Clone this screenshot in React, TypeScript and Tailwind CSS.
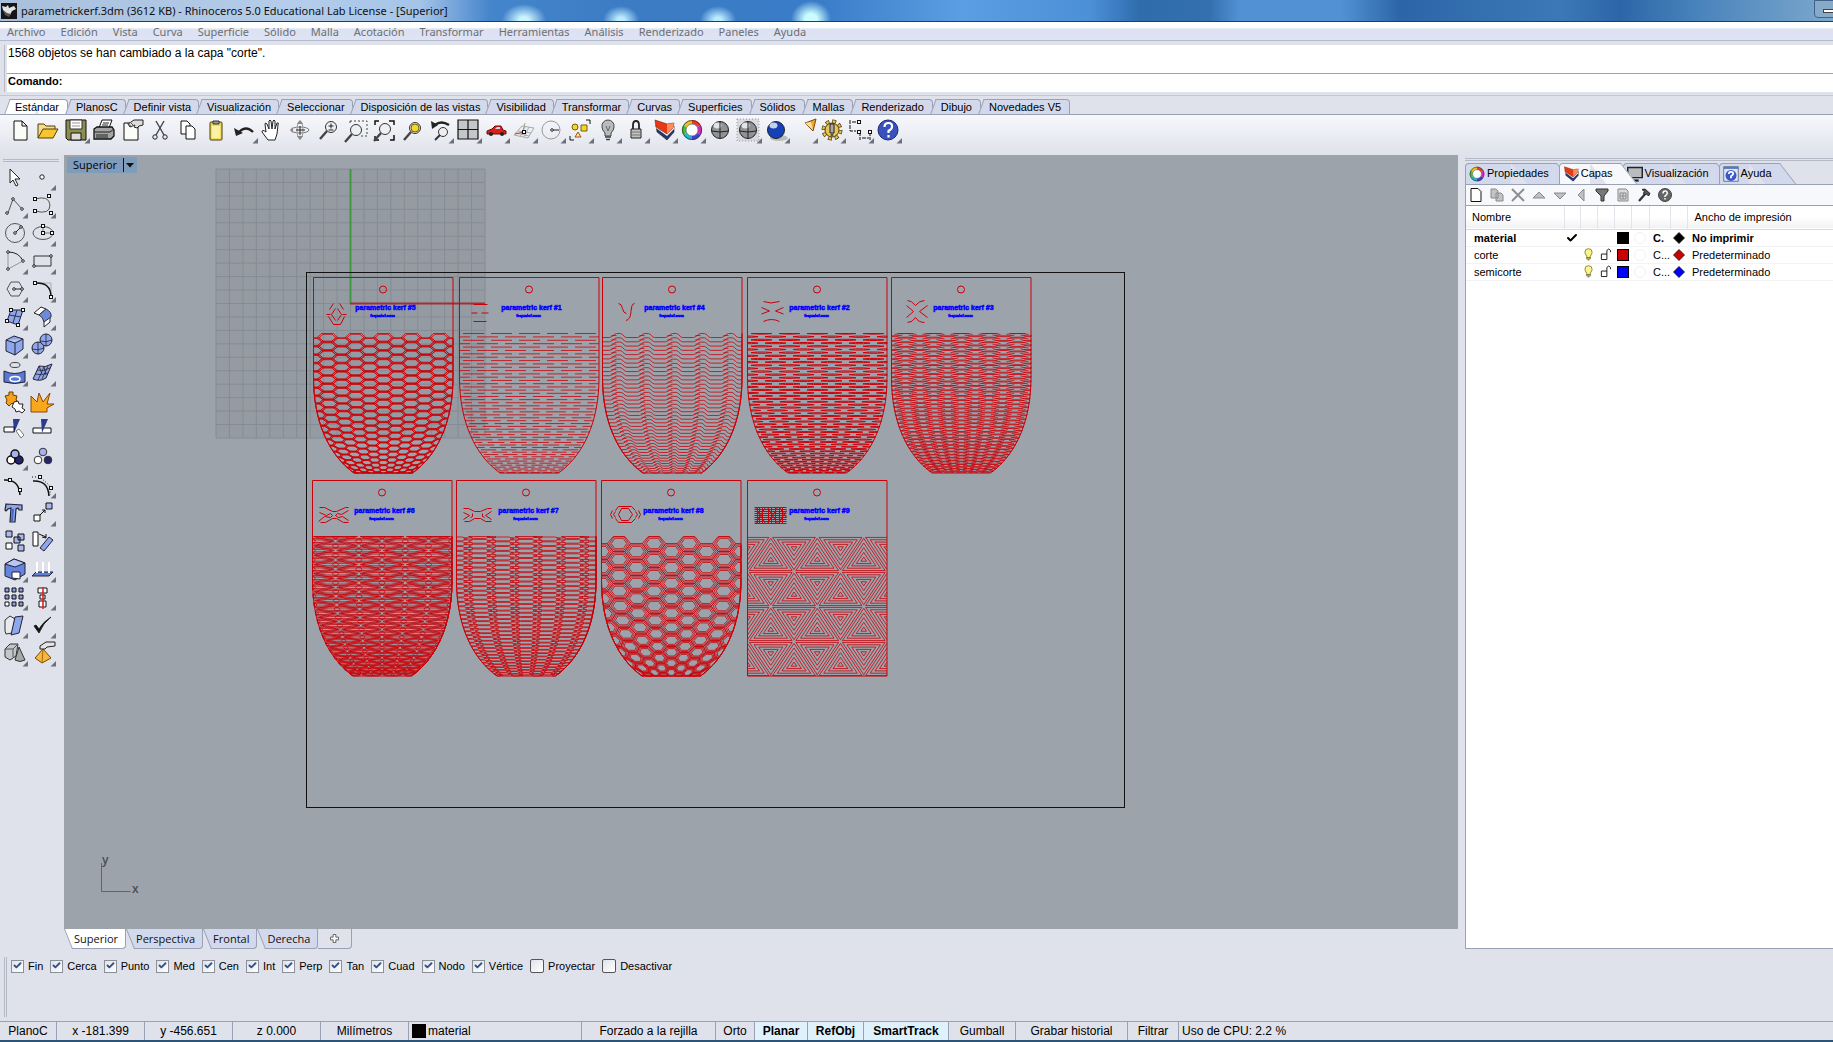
import type { ReactNode } from 'react'
import { Check } from 'lucide-react'

const menus = ['Archivo', 'Edición', 'Vista', 'Curva', 'Superficie', 'Sólido', 'Malla', 'Acotación', 'Transformar', 'Herramientas', 'Análisis', 'Renderizado', 'Paneles', 'Ayuda']

const toolTabs = ['Estándar', 'PlanosC', 'Definir vista', 'Visualización', 'Seleccionar', 'Disposición de las vistas', 'Visibilidad', 'Transformar', 'Curvas', 'Superficies', 'Sólidos', 'Mallas', 'Renderizado', 'Dibujo', 'Novedades V5']

const snaps = [
  { label: 'Fin', on: true },
  { label: 'Cerca', on: true },
  { label: 'Punto', on: true },
  { label: 'Med', on: true },
  { label: 'Cen', on: true },
  { label: 'Int', on: true },
  { label: 'Perp', on: true },
  { label: 'Tan', on: true },
  { label: 'Cuad', on: true },
  { label: 'Nodo', on: true },
  { label: 'Vértice', on: true },
  { label: 'Proyectar', on: false },
  { label: 'Desactivar', on: false }
]

const layers = [
  { name: 'material', current: true, color: '#000000', type: 'C.', width: 'No imprimir' },
  { name: 'corte', current: false, color: '#cc0000', type: 'C...', width: 'Predeterminado' },
  { name: 'semicorte', current: false, color: '#0000ff', type: 'C...', width: 'Predeterminado' }
]

/* ---------- Kerf samples ---------- */

type Pt = [number, number]

const W = 139.5
const H = 195.5
const TOP = 56
const SPAN = 167.4

// Inset of the sample outline at a given height
const inset = (y: number) => {
  if (y <= 100) return 0
  let lo = 0
  let hi = 1
  for (let i = 0; i < 16; i++) {
    const t = (lo + hi) / 2
    const u = 1 - t
    const cy = u * u * u * 100 + 3 * u * u * t * 145 + 3 * u * t * t * 178 + t * t * t * H
    if (cy < y) lo = t
    else hi = t
  }
  const t = lo
  const u = 1 - t
  return 3 * u * t * t * 16 + t * t * t * 40.5
}

const warp = ([x, s]: Pt): Pt => {
  const v = Math.min(Math.max(s / SPAN, 0), 1)
  const y = TOP + W * (1.2 * v - 0.2 * v * v * v)
  const left = inset(y)
  const cx = Math.min(Math.max(x, 0), W)
  return [left + (cx / W) * (W - 2 * left), y]
}

const line = (pts: Pt[], bend = true) =>
  'M' + pts.map((p) => (bend ? warp(p) : p)).map(([x, y]) => `${x.toFixed(2)} ${y.toFixed(2)}`).join('L')

const shape = (cx: number, cy: number, pts: Pt[]) => line(pts.map(([x, y]): Pt => [cx + x, cy + y]))

const hex = (w: number, h: number, flat: number): Pt[] => [[-w, 0], [-flat, -h], [flat, -h], [w, 0], [flat, h], [-flat, h], [-w, 0]]

// Staggered cells: every other row is shifted by half a column
const stagger = (pitchX: number, pitchY: number, x0: number, draw: (x: number, y: number, row: number) => string) => {
  let d = ''
  for (let row = 0; row * pitchY <= SPAN; row++) {
    for (let k = -1; k <= W / pitchX + 1; k++) {
      const x = x0 + k * pitchX + (row % 2 ? pitchX / 2 : 0)
      if (x > -pitchX / 2 && x < W + pitchX / 2) d += draw(x, row * pitchY, row)
    }
  }
  return d
}

const waves = () => {
  let d = ''
  for (let s = 0; s < SPAN; s += 4.3) {
    const pts: Pt[] = []
    for (let k = -1; k < 6; k++) {
      const x = k * 28
      pts.push([x + 7, s + 4], [x + 10, s + 2.8], [x + 12, s + 0.8], [x + 14, s], [x + 18, s], [x + 20, s + 1], [x + 22, s + 3.2], [x + 24, s + 4])
      d += shape(x + 12, s + 2, [[-3, 0], [2, 0]])
    }
    d += line(pts)
  }
  return d
}

const star = () => {
  let d = ''
  const a = 46.5
  const b = 35
  const clip = (p: Pt, q: Pt) => {
    const lo: Pt = [0, TOP]
    const hi: Pt = [W, H]
    let t0 = 0
    let t1 = 1
    for (const i of [0, 1] as const) {
      const dd = q[i] - p[i]
      if (Math.abs(dd) < 1e-6) {
        if (p[i] < lo[i] || p[i] > hi[i]) return
        continue
      }
      const r = [(lo[i] - p[i]) / dd, (hi[i] - p[i]) / dd].sort((m, n) => m - n)
      t0 = Math.max(t0, r[0])
      t1 = Math.min(t1, r[1])
    }
    if (t0 >= t1) return
    const at = (t: number): Pt => [p[0] + (q[0] - p[0]) * t, p[1] + (q[1] - p[1]) * t]
    d += line([at(t0), at(t1)], false)
  }
  // Each lattice edge carries a rhombus hatched along the edge
  const rhombus = (p: Pt, q: Pt, c: Pt, lines: number) => {
    for (let k = 0; k < lines; k++) {
      const t = (k + 0.4) / lines
      clip([p[0] + (c[0] - p[0]) * t, p[1] + (c[1] - p[1]) * t], [q[0] + (c[0] - q[0]) * t, q[1] + (c[1] - q[1]) * t])
    }
  }
  for (let j = -1; j < 6; j++) {
    for (let i = -1; i < 5; i++) {
      const x = i * a + (j % 2 ? 0 : a / 2)
      const y = TOP + j * b
      const p: Pt = [x, y]
      const r: Pt = [x + a, y]
      for (const dir of [1, -1]) {
        const m: Pt = [x + a / 2, y + dir * b]
        const c: Pt = [x + a / 2, y + (dir * b) / 3]
        rhombus(p, r, c, 5)
        rhombus(p, m, c, 5)
        rhombus(r, m, c, 5)
      }
    }
  }
  return d
}

const patterns: Record<number, string> = {
  1: stagger(28, 3.4, 14, (x, y) => shape(x, y, [[-10.5, 0], [10.5, 0]])),
  2: stagger(28, 3.2, 14, (x, y) => shape(x, y, [[-10.5, 0], [-4, -0.6], [4, -0.6], [10.5, 0], [4, 0.6], [-4, 0.6], [-10.5, 0]])),
  3: stagger(28, 2.3, 14, (x, y, row) => shape(x, y, row % 2 ? [[-11, -0.9], [-4, 0.9], [4, 0.9], [11, -0.9]] : [[-11, 0.9], [-4, -0.9], [4, -0.9], [11, 0.9]]) + shape(x, y, [[-8, 0], [8, 0]])),
  4: waves(),
  5: stagger(28, 4.25, 14, (x, y) => shape(x, y + 4.2, hex(8.5, 3.4, 4.5)) + shape(x, y + 4.2, hex(10.5, 4.2, 6))),
  6: stagger(46.5, 4.7, 23, (x, y) => shape(x, y, hex(20, 1.3, 9)) + shape(x, y, hex(22, 2.8, 12)) + shape(x, y, hex(3, 2, 1.5))),
  7: stagger(46.5, 2.4, 23, (x, y) => shape(x, y, hex(11, 1.9, 6)) + shape(x + 12, y, hex(4.5, 1, 3))),
  8: stagger(35, 8.1, 17.5, (x, y) => shape(x, y + 7, hex(7.8, 5.2, 4.2)) + shape(x, y + 7, hex(9.7, 6.7, 5)) + shape(x, y + 7, hex(11.7, 8.1, 5.8))),
  9: star()
}

const marks: Record<number, string> = {
  1: 'M14 27h14M12 35.500h6M22 35.500h7M14 44h13',
  2: 'M16 24q7 3 16 0M14 30l8 3.500-8 3M36 30l-8 3.500 8 3M16 44q8-4 16 0',
  3: 'M16 23q4 0 8 5 4-5 9-5M15 28l7 6-7 6M36 28l-8 6 8 6M16 45q5 0 8-5 3 5 9 5',
  4: 'M16 26q3 0 4 5t4 5M32 26q-3 0-3.500 8t-5 9',
  5: 'M16 32l4-6M30 32l-4-6M22 31l-4 6 4 6M24 31l4 6-4 6M13 37h4M29 37h4M15 39l5 8h7l4-8',
  6: 'M7 27h5l8 4h4l9-4h3M7 32l7 3 4-2 2 2-2 2-6-1-6 5M36 30l-7 4-4-1-2 2 3 2 4-1 6 4M8 42h5l7-4h4l7 4h5',
  7: 'M7 28h5l6 3h6l7-3h4M7 32l6 3-6 4M16 33v3l-2 1M35 31l-6 4 6 4M26 33v3l2 1M8 41h5l5-3h6l5 3h6',
  8: 'M17 34l3-6h7l4 6-4 6h-7zM14 30l3-4h13l4 4M14 38l3 4h13l4-4M14 31l-2 3 2 3M11 30l-2 4 2 4M34 31l2 3-2 3M37 30l2 4-2 4',
  9: 'M7 27h32M7 29h32M7 31h32M7 33h32M7 35h32M7 37h32M7 39h32M7 41h32M7 43h32M8 27l10 16M18 27L8 43M20 27l10 16M30 27L20 43M32 27l7 10M39 30l-8 13M12 27v16M24 27v16M35 27v16M10 27v16M15 27v16M21 27v16M28 27v16M32 27v16'
}

const samples = [
  { id: 5, x: 313.5, y: 277.5 },
  { id: 1, x: 459.5, y: 277.5 },
  { id: 4, x: 602.5, y: 277.5 },
  { id: 2, x: 747.5, y: 277.5 },
  { id: 3, x: 891.5, y: 277.5 },
  { id: 6, x: 312.5, y: 480.5 },
  { id: 7, x: 456.5, y: 480.5 },
  { id: 8, x: 601.5, y: 480.5 },
  { id: 9, x: 747.5, y: 480.5 }
]

function Sample({ id, x, y }: { id: number; x: number; y: number }) {
  return (
    <g transform={`translate(${x} ${y})`} fill="none" stroke="#cc0008" strokeWidth="1">
      <path d={id === 9 ? `M0 0H${W}V${H}H0Z` : `M0 0H${W}V100C${W} 145 ${W - 16} 178 ${W - 40.5} ${H}H40.500C16 178 0 145 0 100Z`} />
      <circle cx="69.5" cy="12" r="3.5" />
      <path d={marks[id]} />
      <path d={patterns[id]} strokeWidth={id === 2 ? 1 : 0.8} />
      <text x="72" y="32" textAnchor="middle" fill="#0000ff" stroke="#0000ff" strokeWidth="0.5" className="font-['Liberation_Sans'] text-[7px] font-bold">
        parametric kerf #{id}
      </text>
      <text x="69" y="39" textAnchor="middle" fill="#0000ff" stroke="#0000ff" strokeWidth="0.5" className="font-['Liberation_Sans'] text-[4px] font-bold">
        fequalsf.com
      </text>
    </g>
  )
}

function Drawing() {
  const grid = Array.from({ length: 21 }, (_, i) => i * 13.45)
  return (
    <svg className="absolute inset-0 size-full" aria-label="Vista superior">
      <g transform="translate(-64 -155)">
        <rect x="216" y="169" width="269" height="269" fill="#959ba2" />
        <path d={grid.map((g) => `M${216 + g} 169v269M216 ${169 + g}h269`).join('')} stroke="#868c93" strokeWidth="1" />
        <path d="M350.500 169v135" stroke="#3f9a3f" strokeWidth="2" />
        <path d="M350 303.500h135" stroke="#a03038" strokeWidth="2" />
        <rect x="306.5" y="272.5" width="818" height="535" fill="none" stroke="#111" />
        {samples.map((s) => (
          <Sample key={s.id} {...s} />
        ))}
        <path d="M101.500 863v28.500h29" fill="none" stroke="#5f656c" />
        <text x="102" y="864" fill="#4a5056" className="font-['Open_Sans'] text-[12px] font-semibold">y</text>
        <text x="132" y="893" fill="#4a5056" className="font-['Open_Sans'] text-[12px] font-semibold">x</text>
      </g>
    </svg>
  )
}

/* ---------- Icons ---------- */

const Handle = ({ x, y }: { x: number; y: number }) => <rect x={x - 1.5} y={y - 1.5} width="3" height="3" fill="#fff" stroke="#111" />

const Node = ({ x, y }: { x: number; y: number }) => <circle cx={x} cy={y} r="1.3" fill="#fff" stroke="#111" strokeWidth="0.9" />

const Layers = () => (
  <>
    <path d="M6 9l11 8 7-7v6l-7 8-10-8z" fill="#23366e" stroke="#222" strokeWidth=".6" />
    <path d="M6 9l11 7 7-6v3l-7 7-11-8z" fill="#f4f4f8" />
    <path d="M5 4l12 4 7-1-1 5-6 6L6 11z" fill="#e63a14" stroke="#7c1a08" strokeWidth=".6" />
    <path d="M17 8l7-1-1 5-6 6z" fill="#ff8a5c" />
  </>
)

const Wheel = () => (
  <g fill="none" strokeWidth="4">
    <path d="M14 6a8 8 0 0 1 7 4" stroke="#ee3a2a" />
    <path d="M21 10a8 8 0 0 1 0 8" stroke="#d42bc0" />
    <path d="M21 18a8 8 0 0 1-7 4" stroke="#4040e0" />
    <path d="M14 22a8 8 0 0 1-7-4" stroke="#25b5d8" />
    <path d="M7 18a8 8 0 0 1 0-8" stroke="#3fc43a" />
    <path d="M7 10a8 8 0 0 1 7-4" stroke="#f0c020" />
    <circle cx="14" cy="14" r="9.500" stroke="#333" strokeWidth=".8" />
    <circle cx="14" cy="14" r="6" fill="#fff" stroke="#555" strokeWidth=".7" />
  </g>
)

const Ball = ({ fill }: { fill: string }) => (
  <>
    <circle cx="14" cy="14" r="8.5" fill={fill} stroke="#222" />
    <ellipse cx="11.5" cy="9.5" rx="4" ry="3" fill="#fff" opacity=".75" />
  </>
)

const Lens = ({ x = 17, y = 11, children }: { x?: number; y?: number; children?: ReactNode }) => (
  <>
    <path d={`M${x - 4} ${y + 4}l-7 8`} stroke="#444" strokeWidth="2.4" />
    <circle cx={x} cy={y} r="5.5" fill="#eef0f4" stroke="#333" />
    {children}
  </>
)

const toolbar: { name: string; more?: boolean; art: ReactNode }[] = [
  { name: 'Nuevo', art: <path d="M8 5h8l5 5v14H8zM16 5v5h5" fill="#fbfbf8" stroke="#111" /> },
  { name: 'Abrir', art: <><path d="M4 22V8h6l2 2h9v4" fill="#f5dc8c" stroke="#54400c" /><path d="M4 22l5-9h15l-5 9z" fill="#f9c52c" stroke="#54400c" /></> },
  { name: 'Guardar', more: true, art: <><path d="M4 4h20v20H6l-2-2z" fill="#8d8d50" stroke="#111" /><path d="M8 4h12v9H8z" fill="#fff" stroke="#333" /><path d="M9 17h10v7H9z" fill="#ddd" stroke="#111" /><path d="M10 7h8M10 10h8" stroke="#999" /></> },
  { name: 'Imprimir', art: <><path d="M9 12l3-8h10l-3 8" fill="#fff" stroke="#111" /><path d="M4 13l3-2h15l2 3v6l-3 3H4z" fill="#a4a4a4" stroke="#111" strokeWidth="1.300" /><path d="M4 16h16l4-3M6 19h12M6 21h12M13 7h6M12 9h6" fill="none" stroke="#222" /></> },
  { name: 'Propiedades del documento', art: <><path d="M6 7h14v17H6z" fill="#fbfbf8" stroke="#111" /><path d="M10 8l6-4h9v5l-4 1-2 2-3-1 1-2-5 2z" fill="#ddd" stroke="#222" /><path d="M9 7l5 4M12 6l5 5" stroke="#555" /></> },
  { name: 'Cortar', art: <><path d="M10 5l8 14M18 5l-8 14" stroke="#444" strokeWidth="1.400" /><circle cx="9" cy="21" r="2.200" fill="none" stroke="#222" /><circle cx="19" cy="21" r="2.200" fill="none" stroke="#222" /></> },
  { name: 'Copiar', art: <><path d="M7 5h6l3 3v10H7z" fill="#fff" stroke="#111" /><path d="M12 10h6l3 3v10h-9z" fill="#fff" stroke="#111" /></> },
  { name: 'Pegar', art: <><rect x="8" y="6" width="12" height="18" rx="1" fill="#f3dc5c" stroke="#4a3c08" /><path d="M10 10h8v12h-8z" fill="#fbf0a4" /><path d="M11 5h6v3h-6z" fill="#999" stroke="#333" /></> },
  { name: 'Deshacer', more: true, art: <><path d="M9 16q7-7 14 0" fill="none" stroke="#222" strokeWidth="2.400" /><path d="M4 12l2 8 7-3z" fill="#222" /></> },
  { name: 'Encuadrar', art: <path d="M10 24l-6-8q0-3 4 0L7 8q0-2 2 0l2 5V5q1-2 2 0l1 8 1-8q1-2 2 0v8l2-6q2-1 1 2l-1 9-2 6z" fill="#fff" stroke="#222" /> },
  { name: 'Rotar vista', art: <><ellipse cx="14" cy="14" rx="9" ry="3" fill="none" stroke="#777" /><ellipse cx="14" cy="14" rx="3" ry="9" fill="none" stroke="#999" /><path d="M11 8l3-4 3 4zM11 20l3 4 3-4zM7 11l-3 3 3 3z" fill="#888" /><path d="M14 10v9M10 14h9" stroke="#222" /></> },
  { name: 'Zoom dinámico', art: <Lens><path d="M14.500 10h5M17 7.500v5M14.500 14h5" stroke="#222" /></Lens> },
  { name: 'Zoom ventana', art: <><path d="M8 5h17v15h-6M8 5v4" fill="none" stroke="#444" strokeDasharray="2 2" /><Lens x={14} y={14} /></> },
  { name: 'Zoom extensión', art: <><path d="M5 9V5h4M19 5h5v4M24 19v5h-4M9 24H5v-4" fill="none" stroke="#111" strokeWidth="1.500" /><Lens x={15} y={13} /></> },
  { name: 'Zoom selección', art: <Lens x={17} y={12}><circle cx="17" cy="12" r="4" fill="#f5d628" stroke="#74600c" /></Lens> },
  { name: 'Deshacer vista', more: true, art: <><path d="M9 9q6-5 14 0" fill="none" stroke="#222" strokeWidth="2.500" /><path d="M5 5l1 8 6-4z" fill="#222" /><circle cx="17" cy="16" r="4.500" fill="#eee" stroke="#333" /><path d="M14 19l-5 5" stroke="#333" strokeWidth="2" /></> },
  { name: 'Cuatro vistas', more: true, art: <path d="M4 4h20v19H4zM14 4v19M4 13.500h20" fill="#c4c6ca" stroke="#111" strokeWidth="1.200" /> },
  { name: 'Vista derecha', more: true, art: <><path d="M5 15l5-2 3-3h6l2 4 3 1v3H5z" fill="#dc2018" stroke="#6a0c08" /><path d="M13 13l2-2h3v2z" fill="#cde" /><circle cx="9" cy="18" r="2" fill="#222" /><circle cx="20" cy="18" r="2" fill="#222" /></> },
  { name: 'Planos de construcción', more: true, art: <><path d="M4 19l8-9 12 2-6 10zM8 15l13 2M15 11l-5 10M19 11l-5 10M6 17l13 3" fill="none" stroke="#aaa" /><path d="M5 18l9-2" stroke="#c33" /><path d="M13 15l2-8" stroke="#8a8" /><Handle x={14} y={16} /></> },
  { name: 'Punto objetivo', more: true, art: <><circle cx="13" cy="14" r="9" fill="none" stroke="#999" /><path d="M13 14h8" stroke="#222" /><Node x={14} y={14} /></> },
  { name: 'Seleccionar objetos', more: true, art: <><circle cx="9" cy="11" r="3" fill="#f5d628" stroke="#74600c" /><path d="M15 9h6v6h-6z" fill="#f5d628" stroke="#74600c" /><path d="M12 16l3 5H9z" fill="#fce8a8" stroke="#a84c0c" /><path d="M20 4h4v4M4 20v4h4" fill="none" stroke="#111" /></> },
  { name: 'Ocultar', more: true, art: <><path d="M14 4a6 6 0 0 1 6 7q0 3-3 6v3h-6v-3q-3-3-3-6a6 6 0 0 1 6-7z" fill="#b9bbbf" stroke="#444" /><path d="M11 21h6M12 23.500h4" stroke="#444" strokeWidth="1.500" /><path d="M12 10l2 5 2-5" stroke="#666" fill="none" /></> },
  { name: 'Bloquear', more: true, art: <><path d="M11 13V9q0-4 3-4t3 4v4" fill="none" stroke="#222" strokeWidth="1.800" /><path d="M9 13h10v9H9z" fill="#c0c2c0" stroke="#222" /><path d="M10 16h8M10 19h8" stroke="#777" /></> },
  { name: 'Capas', more: true, art: <Layers /> },
  { name: 'Propiedades', more: true, art: <Wheel /> },
  { name: 'Sombrear', art: <><Ball fill="#909296" /><path d="M14 5.500v17M5.500 15q8 2 17 0" fill="none" stroke="#222" /></> },
  { name: 'Sombrear vistas', more: true, art: <><path d="M3 3h22v22H3z" fill="#d8dae0" stroke="#999" strokeDasharray="1 2" /><Ball fill="#909296" /><path d="M14 5.500v17M5.500 15q8 2 17 0" fill="none" stroke="#222" /></> },
  { name: 'Renderizar', more: true, art: <><ellipse cx="17" cy="22" rx="9" ry="3" fill="#bbb" /><Ball fill="#1440b8" /></> },
  { name: 'Foco', more: true, art: <><path d="M15 7l11-4-3 12z" fill="#f3a52c" stroke="#74480c" /><path d="M15 7l6-1 2 8" fill="#fce0a0" /></> },
  { name: 'Opciones', more: true, art: <><circle cx="14" cy="14" r="8.500" fill="none" stroke="#54400c" strokeWidth="4" strokeDasharray="3.800 2.875" /><circle cx="14" cy="14" r="8.500" fill="none" stroke="#eac454" strokeWidth="2.400" strokeDasharray="2.400 4.275" strokeDashoffset="-.7" /><circle cx="14" cy="14" r="7" fill="#eac454" stroke="#54400c" /><path d="M12 8h4v9h-4z" fill="#aaa" stroke="#222" /><circle cx="14" cy="19" r="1.500" fill="#555" /></> },
  { name: 'Acotación', more: true, art: <><path d="M6 6h8M4 4v11h6M14 16v8M24 16v8M16 22h7" fill="none" stroke="#111" strokeDasharray="4 1" /><Handle x={13} y={6} /><Handle x={13} y={16} /><Handle x={24} y={16} /></> },
  { name: 'Ayuda', more: true, art: <><circle cx="14" cy="14" r="10" fill="#3a50bc" stroke="#1c2c74" /><path d="M10.500 11q0-4 4-4t3.500 4q0 2-3.500 4v2M14.500 19v2.500" fill="none" stroke="#fff" strokeWidth="2.200" /></> }
]

const B = '#8ea6ec'

const tools: { name: string; more?: boolean; art: ReactNode }[] = [
  { name: 'Cancelar', art: <path d="M10 6v14l3-3 3 6 2-1-3-6h5z" fill="#fff" stroke="#222" /> },
  { name: 'Punto', more: true, art: <circle cx="14" cy="14" r="2.200" fill="#fff" stroke="#222" /> },
  { name: 'Polilínea', more: true, art: <><path d="M8 22l5-14 9 10" fill="none" stroke="#555" /><Node x={7} y={22} /><Node x={13} y={8} /><Node x={22} y={18} /></> },
  { name: 'Curva', more: true, art: <><path d="M7 8q14-4 15 6 0 10-15 6" fill="none" stroke="#555" /><Handle x={7} y={8} /><Handle x={21} y={5} /><Handle x={7} y={20} /><Handle x={23} y={22} /></> },
  { name: 'Círculo', more: true, art: <><circle cx="15" cy="14" r="9.500" fill="none" stroke="#555" /><path d="M15 14l6-6" stroke="#222" /><Node x={15} y={14} /><Node x={21} y={8} /></> },
  { name: 'Elipse', more: true, art: <><ellipse cx="15" cy="14" rx="10" ry="6.500" fill="none" stroke="#555" /><path d="M15 7v7h9" fill="none" stroke="#777" /><Handle x={15} y={7} /><Handle x={15} y={14} /><Handle x={24} y={14} /></> },
  { name: 'Arco', more: true, art: <><path d="M8 5v17l15-8" fill="none" stroke="#999" /><path d="M8 5q11 0 15 9" fill="none" stroke="#222" /><Node x={8} y={5} /><Node x={8} y={22} /><Node x={23} y={14} /></> },
  { name: 'Rectángulo', more: true, art: <><path d="M6 9h17v10H6z" fill="none" stroke="#333" /><Node x={23} y={9} /><Node x={6} y={19} /></> },
  { name: 'Polígono', more: true, art: <><path d="M7 14l4-7h8l4 7-4 7h-8z" fill="none" stroke="#555" /><path d="M14 14h8" stroke="#222" /><Node x={14} y={14} /><Node x={22} y={14} /></> },
  { name: 'Empalme', more: true, art: <><path d="M7 8h16v14" fill="none" stroke="#aaa" /><path d="M7 8q16-1 16 14" fill="none" stroke="#111" strokeWidth="1.500" /><Handle x={7} y={8} /><Handle x={23} y={22} /></> },
  { name: 'Superficie', more: true, art: <><path d="M11 7h12l-5 15-11-4z" fill={B} stroke="#223" /><path d="M9 12l12 2M17 7l-4 13" stroke="#334" /><Handle x={11} y={7} /><Handle x={23} y={7} /><Handle x={7} y={18} /><Handle x={18} y={22} /></> },
  { name: 'Empalmar superficies', more: true, art: <><path d="M6 10l7-6 5 2-7 6zM16 18l6-4v5l-6 5z" fill="#fff" stroke="#222" /><path d="M11 12l7-6q6 3 5 8l-7 5q-1-5-5-7z" fill="#7088d8" stroke="#334" /></> },
  { name: 'Caja', more: true, art: <><path d="M6 9l8-4 9 3v10l-8 6-9-4z" fill={B} stroke="#223" /><path d="M6 9l9 3 8-4" fill="#b8c6f4" stroke="#223" /><path d="M15 12v12" stroke="#223" /></> },
  { name: 'Esferas booleanas', more: true, art: <><circle cx="18" cy="9" r="6" fill={B} stroke="#223" /><circle cx="10" cy="17" r="6" fill={B} stroke="#223" /><path d="M4 18q6 2 12-1M10 11v12M12 10q6 2 12-1M18 3v12" fill="none" stroke="#223" strokeWidth=".8" /></> },
  { name: 'Proyectar curvas', more: true, art: <><ellipse cx="15" cy="6" rx="5" ry="2.500" fill="none" stroke="#444" /><path d="M4 12q11 5 21 0v11q-10 3-21 0z" fill="#5878d8" stroke="#223" /><ellipse cx="15" cy="20" rx="5" ry="2.500" fill="none" stroke="#fff" strokeWidth="1.500" /></> },
  { name: 'Malla', more: true, art: <><path d="M11 7q6 2 13-2l-6 14q-6 4-13 1z" fill={B} stroke="#223" /><path d="M9 11q6 2 13-2M7 15q6 2 13-1M16 8l-6 13M20 7l-6 13M11 7l3 8M16 8l2 8" fill="none" stroke="#223" strokeWidth=".8" /></> },
  { name: 'Unir', art: <><path d="M5 9l4-1V5h4v3l4 1-1 4 2 2-4 3-2-2-3 3-3-3 1-3z" fill="#f5a11c" stroke="#6a3c04" /><path d="M14 15l4-1 1 3h4l-1 4 3 2-3 3-3-2-3 1-1-3-3-2z" fill="#fff" stroke="#222" /></> },
  { name: 'Descomponer', art: <path d="M3 25V9l6 6 2-9 4 9 7-9-3 11h7l-7 4v4z" fill="#f9a81c" stroke="#8a4808" /> },
  { name: 'Recortar', art: <><path d="M13 4h7l-6 14z" fill="#2a3c8c" /><path d="M4 12h10v5H4z" fill="#fff" stroke="#111" /><path d="M16 16l3-2 5 6-3 3z" fill="#fff" stroke="#777" /></> },
  { name: 'Partir', art: <><path d="M5 13h18v5H5z" fill="#fff" stroke="#111" /><path d="M13 4h7l-6 14z" fill="#2a3c8c" /></> },
  { name: 'Agrupar', more: true, art: <g stroke="#111" strokeWidth="1.500"><circle cx="11" cy="17" r="4" fill="#fff" /><circle cx="19" cy="17" r="4" fill="#24246c" /><circle cx="15" cy="11" r="4" fill="#a8b0f0" /></g> },
  { name: 'Desagrupar', art: <g stroke="#333"><circle cx="15" cy="9" r="3.800" fill="#a8b0f0" /><circle cx="10" cy="17" r="3.800" fill="#fff" /><circle cx="20" cy="17" r="3.800" fill="#24246c" /></g> },
  { name: 'Editar puntos', art: <><path d="M4 9q15-1 16 15" fill="none" stroke="#111" strokeWidth="1.500" /><Handle x={10} y={9} /><Handle x={20} y={19} /></> },
  { name: 'Puntos de control', more: true, art: <><path d="M5 10q15-1 16 15" fill="none" stroke="#111" strokeWidth="1.500" /><path d="M4 6h8l10 9v9" fill="none" stroke="#111" strokeDasharray="1 2" /><Handle x={12} y={6} /><Handle x={23} y={17} /></> },
  { name: 'Texto', art: <><path d="M6 5l16 1v5h-3l-1-2-2 1-1 13h-5l1-14-3 1-2 2-1-1z" fill={B} stroke="#223" strokeWidth="1.200" /><path d="M13 10l-1 12" stroke="#4466c8" strokeWidth="2" /></> },
  { name: 'Mover', more: true, art: <><path d="M6 16h6v6H6z" fill="#fff" stroke="#111" /><path d="M18 4h6v6h-6z" fill="#a8b8f0" stroke="#111" /><path d="M12 16l5-5M14 11h3v3" fill="none" stroke="#111" /></> },
  { name: 'Copiar objetos', art: <g stroke="#111"><path d="M6 4h6v6H6zM18 7h6v6h-6zM14 10h6v6h-6zM18 18h6v6h-6z" fill="#a8b8f0" /><path d="M6 16h6v6H6z" fill="#fff" /></g> },
  { name: 'Rotar', art: <><path d="M5 5h5v14H5z" fill="#fff" stroke="#111" /><path d="M12 21l9-11 4 3-9 11z" fill={B} stroke="#223" /><path d="M11 7l7 3M18 7v4l-4-1" fill="none" stroke="#111" /></> },
  { name: 'Escalar', more: true, art: <><path d="M5 9l9-5 11 4v11l-10 6-10-4z" fill="#6484e0" stroke="#223" /><path d="M5 9l9-5 11 4-10 4z" fill="#b8c6f4" stroke="#223" /><path d="M12 17h8v7l-8-1z" fill="#fff" stroke="#223" /></> },
  { name: 'Proyectar', more: true, art: <><path d="M4 21l4-4h17l-4 4z" fill="#6080dc" stroke="#223" /><path d="M9 18V7M15 18V7M21 18V7" stroke="#fff" strokeWidth="2" /></> },
  { name: 'Matriz', more: true, art: <g stroke="#111"><path d="M5 5h4v4H5zM12 5h4v4h-4zM19 5h4v4h-4zM5 12h4v4H5zM12 12h4v4h-4zM19 12h4v4h-4zM12 19h4v4h-4zM19 19h4v4h-4z" fill="#8c9ce0" /><path d="M5 19h4v4H5z" fill="#fff" /></g> },
  { name: 'Alinear', more: true, art: <><path d="M10 5h9v5h-9zM12 12h5v4h-5zM11 18h7v6h-7z" fill="#fff" stroke="#111" /><path d="M15 4v22" stroke="#e02020" strokeWidth="1.600" /></> },
  { name: 'Historial', more: true, art: <><path d="M5 9l5-4 5 3-3 14-6 1-1-3z" fill="#e8eaee" stroke="#333" /><path d="M15 6l8-1-4 17-8 2z" fill={B} stroke="#223" /></> },
  { name: 'Comprobar', more: true, art: <path d="M6 15l5 7q4-10 12-16-8 5-12 12l-3-4z" fill="#111" stroke="#111" strokeWidth=".8" /> },
  { name: 'Sólidos', more: true, art: <><path d="M5 10l5-5h8l-2 12-6 4-5-3z" fill="#c4c6ca" stroke="#333" /><path d="M5 10h8l5-5M13 10v8" fill="none" stroke="#555" /><path d="M19 8l6 13q-5 3-10 0z" fill="#a6a8ac" stroke="#333" /></> },
  { name: 'Renderizado', more: true, art: <><path d="M7 19l8-9 8 9-9 5z" fill="#f7b93c" stroke="#74480c" /><path d="M15 10l-1 14" stroke="#a8680c" /><path d="M12 7l6-4h9v4l-8 1-2 2h-5z" fill="#e4e4e4" stroke="#222" /></> }
]

function ToolButton({ name, more, art }: { name: string; more?: boolean; art: ReactNode }) {
  return (
    <button type="button" title={name} aria-label={name} className="size-7 shrink-0">
      <svg viewBox="0 0 28 28" className="size-7" fill="none">
        {art}
        {more && <path d="M28 22v5.500h-5.500z" fill="#6d7078" />}
      </svg>
    </button>
  )
}

function Caption({ children }: { children: ReactNode }) {
  return (
    <div className="relative h-[22px] shrink-0 overflow-hidden border-b border-[#1f3c6c] bg-[radial-gradient(ellipse_22px_16px_at_524px_20px,#c9f4ff_20%,transparent),radial-gradient(ellipse_18px_14px_at_621px_20px,#b9eaff_20%,transparent),radial-gradient(ellipse_18px_14px_at_718px_20px,#b9eaff_20%,transparent),radial-gradient(ellipse_20px_18px_at_811px_19px,#c9fbff_30%,transparent),linear-gradient(90deg,#a8c0dc_0,#b4cdea_300px,#a4c4e8_420px,#4585cc_490px,#3c7cc4_620px,#3a7cc8_820px,#5c9ee2_960px,#4c90d8_1090px,#2f6cac_1140px,#3470b0_1210px,#5292d4_1240px,#5292d4_1340px,#2c66a8_1400px,#3c78b8_1560px,#2c66a8_1620px,#4a84bc_1700px,#7ca8cc_1833px)]">
      {children}
    </div>
  )
}

function ViewTab({ label, active }: { label: string; active?: boolean }) {
  const tone = active ? 'before:bg-white after:bg-white' : 'before:bg-[#d3d9ec] after:bg-[#d3d9ec]'
  return (
    <button type="button" className={`relative isolate h-5 pr-2 pl-[10px] text-[11px] text-[#111] before:absolute before:inset-y-0 before:left-1 before:-z-10 before:w-1/2 before:skew-x-[22deg] before:border-b before:border-l before:border-[#9aa1b4] after:absolute after:inset-y-0 after:right-0 after:-z-10 after:w-1/2 after:rounded-br after:border-r after:border-b after:border-[#9aa1b4] ${tone}`}>
      {label}
    </button>
  )
}

function PanelTab({ label, active, children }: { label: string; active?: boolean; children: ReactNode }) {
  const tone = active ? 'z-10 before:bg-[#f7f8fb] after:bg-[#f7f8fb]' : 'before:bg-[#d3d9ec] after:bg-[#d3d9ec]'
  return (
    <button type="button" className={`relative isolate flex h-[21px] items-center gap-0.5 pr-2 pl-1 text-[11px] before:absolute before:inset-y-0 before:left-0 before:-z-10 before:w-1/2 before:rounded-tl before:border-t before:border-l before:border-[#9aa1b4] after:absolute after:inset-y-0 after:-right-2 after:-z-10 after:w-1/2 after:skew-x-[38deg] after:border-t after:border-r after:border-[#9aa1b4] ${tone}`}>
      <svg viewBox="3 3 22 22" className="size-4" fill="none">
        {children}
      </svg>
      {label}
    </button>
  )
}

const panelTools: { name: string; art: ReactNode }[] = [
  { name: 'Nueva capa', art: <path d="M3 1.500h7l3 3v10H3z" fill="#fff" stroke="#111" /> },
  { name: 'Nueva subcapa', art: <path d="M2 2h5l2 2v7H2zM7 6h5l2 2v6H7z" fill="#c4c4c4" stroke="#8a8a8a" /> },
  { name: 'Eliminar', art: <path d="M2 2l12 12M14 2L2 14" stroke="#8f8f8f" strokeWidth="2" /> },
  { name: 'Subir', art: <path d="M2 11l6-6 6 6z" fill="#c0c0c0" stroke="#8a8a8a" /> },
  { name: 'Bajar', art: <path d="M2 6l6 6 6-6z" fill="#c0c0c0" stroke="#8a8a8a" /> },
  { name: 'Mover a la izquierda', art: <path d="M11 2L5 8l6 6z" fill="#c0c0c0" stroke="#8a8a8a" /> },
  { name: 'Filtro', art: <path d="M2 2h12v2l-4 5v5H7V9L2 4z" fill="#777" stroke="#333" /> },
  { name: 'Columnas', art: <><path d="M3 2h8l2 2v10H3z" fill="#d8d8d8" stroke="#8a8a8a" /><path d="M5 6h6v6H5zM8 6v6M5 9h6" stroke="#8a8a8a" /></> },
  { name: 'Herramientas', art: <><path d="M3 14l7-8" stroke="#333" strokeWidth="2.200" /><path d="M6 2.500l3-.500 5 4.500-1.500 2.500-2-2-2 1-1-2 1-1.500z" fill="#555" stroke="#222" /></> },
  { name: 'Ayuda', art: <><circle cx="8" cy="8" r="6.500" fill="#666" stroke="#444" /><path d="M6 6.500q0-2.500 2.200-2.500t2 2.500q0 1-2.200 2.500v1M8 11v1.500" stroke="#fff" strokeWidth="1.500" /></> }
]

function LayerPanel() {
  return (
    <aside className="flex w-[368px] shrink-0 flex-col pt-[3px]">
      <div className="h-[3px] border-y border-[#b4b9c6]" />
      <div className="mt-0.5 flex gap-0.5">
        <PanelTab label="Propiedades"><Wheel /></PanelTab>
        <PanelTab label="Capas" active><Layers /></PanelTab>
        <PanelTab label="Visualización"><path d="M4 5h20v14H4z" fill="#b8bcc0" stroke="#222" strokeWidth="2" /><path d="M9 23h10" stroke="#222" strokeWidth="3" /></PanelTab>
        <PanelTab label="Ayuda"><path d="M4 4h20v20H4z" fill="#dfe6f8" stroke="#456" /><path d="M4 5.500h20" stroke="#5878c0" strokeWidth="3" /><circle cx="14" cy="16" r="7.500" fill="#3a58c8" /><path d="M11 14q0-3 3-3t3 3q0 1-3 3v3" stroke="#fff" strokeWidth="2.500" /></PanelTab>
      </div>
      <div className="flex h-[22px] items-center gap-[5px] border-t border-b border-l border-[#9aa1b4] bg-[#f7f8fb] pl-0.5">
        {panelTools.map((t) => (
          <button key={t.name} type="button" title={t.name} aria-label={t.name} className="size-4">
            <svg viewBox="0 0 16 16" className="size-4" fill="none">{t.art}</svg>
          </button>
        ))}
      </div>
      <div className="flex-1 border-b border-l border-[#9aa1b4] bg-white">
        <table className="w-full table-fixed border-collapse text-left text-[11px] leading-4 whitespace-nowrap">
          <colgroup>
            <col className="w-[98px]" />
            <col className="w-4" />
            <col className="w-[17px]" />
            <col className="w-[17px]" />
            <col className="w-[17px]" />
            <col className="w-[18px]" />
            <col className="w-[21px]" />
            <col className="w-[17px]" />
            <col />
          </colgroup>
          <thead>
            <tr className="h-[23px] border-b border-[#d8dae0] bg-linear-to-b from-white from-50% to-[#f1f2f5]">
              <th className="border-r border-[#e4e5ea] pl-1.5 font-normal">Nombre</th>
              {['Actual', 'Activada', 'Bloqueada', 'Color', 'Material', 'Tipo', 'Color de impresión'].map((h) => (
                <th key={h} aria-label={h} className="border-r border-[#e4e5ea]" />
              ))}
              <th className="pl-[7px] font-normal">Ancho de impresión</th>
            </tr>
          </thead>
          <tbody>
            {layers.map((l) => (
              <tr key={l.name} className={`h-[17px] border-b border-[#f3f3f5] ${l.current ? 'font-bold' : ''}`}>
                <td className="pl-2">{l.name}</td>
                <td>{l.current && <Check className="mx-auto size-3 stroke-[4]" />}</td>
                <td>
                  {!l.current && (
                    <svg viewBox="0 0 10 14" className="mx-auto h-[13px] w-[9px]">
                      <path d="M5 .5a4 4 0 0 1 4 4Q9 6 7 9v3H3V9Q1 6 1 4.500a4 4 0 0 1 4-4z" fill="#fbf58c" stroke="#87802c" />
                      <path d="M3 10.500h4M4 13h2" stroke="#555" />
                    </svg>
                  )}
                </td>
                <td>
                  {!l.current && (
                    <svg viewBox="0 0 12 14" className="mx-auto h-[13px] w-[11px]" fill="none" stroke="#111">
                      <path d="M1.500 6.500h6v6h-6zM7.500 6.500v-4q2-3 4 0v2" />
                    </svg>
                  )}
                </td>
                <td><div className="mx-auto size-3 border border-black" style={{ backgroundColor: l.color }} /></td>
                <td><div className="mx-auto size-3 rounded-full border border-[#f1f1f3]" /></td>
                <td className="pl-1">{l.type}</td>
                <td>
                  <svg viewBox="0 0 12 12" className="mx-auto size-3">
                    <path d="M6 .5L11.500 6 6 11.500.5 6z" fill={l.color} stroke="#111" strokeWidth=".8" />
                  </svg>
                </td>
                <td className="pl-[5px]">{l.width}</td>
              </tr>
            ))}
          </tbody>
        </table>
      </div>
    </aside>
  )
}

export default function App() {
  return (
    <div className="flex min-h-screen flex-col overflow-hidden bg-[#dfe2eb] font-['Liberation_Sans',sans-serif] text-black">
      <Caption>
        <div className="flex h-[22px] items-center gap-1 pl-px">
          <svg viewBox="0 0 16 16" className="size-4">
            <path d="M0 0h16v16H0z" fill="#161616" />
            <path d="M1 3l4 1 2-2 1 3 5-2 2 3-4 2-2 4-4-1-3-4z" fill="#e4e4e4" />
            <path d="M2 7l4 3 4 1-2 3-4-2z" fill="#555" />
          </svg>
          <h1 className="font-['Noto_Sans',sans-serif] text-[11px] text-[#111]">parametrickerf.3dm (3612 KB) - Rhinoceros 5.0 Educational Lab License - [Superior]</h1>
        </div>
        <button type="button" aria-label="Minimizar" className="absolute top-0 -right-2 flex h-[18px] w-[27px] items-end rounded-bl border border-[#3f648c] bg-[#86aac8] pb-1 pl-2">
          <span className="h-1 w-3 border border-[#444] bg-white" />
        </button>
      </Caption>

      <nav className="flex h-[19px] shrink-0 items-center gap-[15px] border-b border-[#b4b9cc] bg-linear-to-b from-white from-30% via-[#dce2f1] via-40% to-[#dfe4f4] pt-0.5 pl-[7px] font-['Noto_Sans',sans-serif] text-[11px] text-[#6c6e74]">
        {menus.map((m) => (
          <button key={m} type="button">{m}</button>
        ))}
      </nav>

      <section className="mt-1 ml-1 shrink-0 border-l border-[#b4b9c6] pl-0.5">
        <div className="h-7 bg-white pl-px text-[12px] leading-4">1568 objetos se han cambiado a la capa "corte".</div>
        <label className="flex h-[19px] items-center border-t border-[#9aa1ac] bg-white pb-[3px] pl-px text-[11px] font-bold">
          Comando:
          <input type="text" className="ml-1 min-w-0 flex-1 bg-transparent font-normal outline-none" />
        </label>
      </section>

      <div className="mt-[3px] flex h-5 shrink-0 items-end border-t border-b border-t-[#c4c8d2] border-b-[#9aa1b4] pl-[7px]">
        {toolTabs.map((t, i) => (
          <button
            key={t}
            type="button"
            className={`relative isolate h-[15px] pl-2 text-[11px] leading-[17px] before:absolute before:inset-y-0 before:left-0 before:-z-10 before:w-1/2 before:skew-x-[-20deg] before:border-t before:border-l before:border-[#9aa1b4] after:absolute after:inset-y-0 after:right-0 after:-z-10 after:w-1/2 after:rounded-tr after:border-t after:border-r after:border-[#9aa1b4] ${i === 0 || i > 8 ? 'pr-[9px]' : 'pr-2'} ${i === 0 ? 'before:bg-white after:bg-white' : 'before:bg-[#d3d9ea] after:bg-[#d3d9ea]'}`}
          >
            {t}
          </button>
        ))}
      </div>

      <div className="flex h-10 shrink-0 items-start bg-linear-to-b from-[#f7f8fb] to-[#dfe2eb] pt-px pl-1.5">
        {toolbar.map((t) => (
          <ToolButton key={t.name} {...t} />
        ))}
      </div>

      <main className="flex flex-1">
        <div className="w-16 shrink-0 pt-1">
          <div className="ml-[3px] h-[3px] w-14 border-y border-[#b4b9c6]" />
          <div className="mt-px grid w-14 grid-cols-2">
            {tools.map((t) => (
              <ToolButton key={t.name} {...t} />
            ))}
          </div>
        </div>

        <div className="flex min-w-0 flex-1 flex-col">
          <div className="relative flex-1 overflow-hidden bg-[#9ca3ab]">
            <Drawing />
            <button type="button" className="absolute top-0.5 left-[3px] flex h-4 items-center gap-1.5 bg-[#7f9cbb] pr-0.5 pl-1.5 font-['Open_Sans',sans-serif] text-[11px]">
              Superior
              <svg viewBox="0 0 12 14" className="h-3.5 w-3">
                <path d="M.5 0v14" stroke="#111" />
                <path d="M3 5h8L7 9.500z" fill="#111" />
              </svg>
            </button>
          </div>
          <div className="flex h-5 shrink-0 font-['Open_Sans',sans-serif]">
            <ViewTab label="Superior" active />
            <ViewTab label="Perspectiva" />
            <ViewTab label="Frontal" />
            <ViewTab label="Derecha" />
            <button type="button" aria-label="Nueva vista" className="flex h-5 w-[34px] items-center justify-center rounded-br border-r border-b border-[#9aa1b4]">
              <svg viewBox="0 0 10 10" className="size-[9px]">
                <path d="M3.500.5h3v3h3v3h-3v3h-3v-3h-3v-3h3z" fill="#fff" stroke="#555" />
              </svg>
            </button>
          </div>
        </div>

        <div className="w-[7px] shrink-0" />
        <LayerPanel />
      </main>

      <fieldset className="mt-2 mb-1 ml-1 flex h-[60px] shrink-0 items-start gap-[7px] border-l-3 border-double border-[#b4b9c6] pt-0.5 pl-1">
        {snaps.map((s) => (
          <label key={s.label} className="relative flex items-center gap-1 text-[11px] leading-[14px]">
            <input type="checkbox" defaultChecked={s.on} className={`peer appearance-none border border-[#8a8f98] bg-linear-to-br from-[#dfe3ea] to-white ${s.on ? 'size-[13px]' : 'size-[14px] rounded-xs border-[#555]'}`} />
            <Check className="pointer-events-none absolute top-0.5 left-0.5 hidden size-[9px] stroke-[5] text-[#34508c] peer-checked:block" />
            {s.label}
          </label>
        ))}
      </fieldset>

      <footer className="flex h-[21px] shrink-0 border-t border-b-2 border-t-[#9aa1b4] border-b-[#2c5478] text-[12px] leading-[18px]">
        <button type="button" className="w-[57px] border-r border-[#9aa1b4]">PlanoC</button>
        <div className="w-[88px] border-r border-[#9aa1b4] text-center">x -181.399</div>
        <div className="w-[88px] border-r border-[#9aa1b4] text-center">y -456.651</div>
        <div className="w-[88px] border-r border-[#9aa1b4] text-center">z 0.000</div>
        <button type="button" className="w-[88px] border-r border-[#9aa1b4]">Milímetros</button>
        <button type="button" className="flex w-[173px] items-center gap-0.5 border-r border-[#9aa1b4] pl-[3px]">
          <span className="size-3.5 bg-black" />
          material
        </button>
        <button type="button" className="w-[134px] border-r border-[#9aa1b4]">Forzado a la rejilla</button>
        <button type="button" className="w-[39px] border-r border-[#9aa1b4]">Orto</button>
        <button type="button" className="w-[53px] border-r border-[#9aa1b4] bg-[#dff1fb] font-bold">Planar</button>
        <button type="button" className="w-14 border-r border-[#9aa1b4] bg-[#dff1fb] font-bold">RefObj</button>
        <button type="button" className="w-[85px] border-r border-[#9aa1b4] bg-[#dff1fb] font-bold">SmartTrack</button>
        <button type="button" className="w-[67px] border-r border-[#9aa1b4]">Gumball</button>
        <button type="button" className="w-28 border-r border-[#9aa1b4]">Grabar historial</button>
        <button type="button" className="w-[51px] border-r border-[#9aa1b4]">Filtrar</button>
        <div className="pl-[3px]">Uso de CPU: 2.2 %</div>
      </footer>
    </div>
  )
}
